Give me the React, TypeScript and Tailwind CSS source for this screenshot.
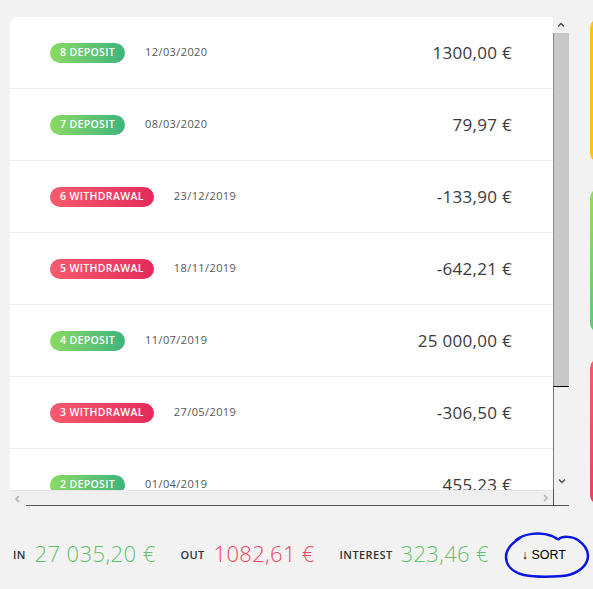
const rows = [
  { n: 8, type: "deposit", date: "12/03/2020", amount: "1300,00 €" },
  { n: 7, type: "deposit", date: "08/03/2020", amount: "79,97 €" },
  { n: 6, type: "withdrawal", date: "23/12/2019", amount: "-133,90 €" },
  { n: 5, type: "withdrawal", date: "18/11/2019", amount: "-642,21 €" },
  { n: 4, type: "deposit", date: "11/07/2019", amount: "25 000,00 €" },
  { n: 3, type: "withdrawal", date: "27/05/2019", amount: "-306,50 €" },
  { n: 2, type: "deposit", date: "01/04/2019", amount: "455,23 €" },
];

function Badge({ n, type }: { n: number; type: string }) {
  const color =
    type === "deposit"
      ? "bg-linear-to-r from-[#8ada61] to-[#3db37b]"
      : "bg-linear-to-r from-[#f65a6e] to-[#e3295a]";
  return (
    <div className={`flex h-[20px] items-center rounded-full px-[10px] text-[10.5px] font-semibold uppercase tracking-[0.35px] text-white ${color}`}>
      {n} {type}
    </div>
  );
}

function Chevron({ d, color }: { d: string; color: string }) {
  return (
    <svg width="8" height="8" viewBox="0 0 8 8">
      <polyline points={d} fill="none" stroke={color} strokeWidth="1.5" />
    </svg>
  );
}

export default function App() {
  return (
    <div className="flex h-screen w-screen gap-[21px] overflow-hidden bg-[#f2f2f2] pl-[10px] pt-[17px] font-['Open_Sans',sans-serif]">
      <div className="flex w-[559px] shrink-0 flex-col">
        <div className="flex h-[489px]">
          <div className="flex w-[543px] flex-col">
            <div className="flex-1 overflow-hidden rounded-tl-lg bg-white">
              {rows.map((r) => (
                <div key={r.n} className="flex h-[72px] shrink-0 items-center border-b border-[#eeeeee] pl-[40px] pr-[41px]">
                  <Badge n={r.n} type={r.type} />
                  <span className="ml-[20px] text-[11px] tracking-[0.4px] text-[#555]">{r.date}</span>
                  <span className="ml-auto text-[17px] tracking-[0.3px] text-[#3a3a3a]">{r.amount}</span>
                </div>
              ))}
            </div>
            {/* horizontal scrollbar */}
            <div className="flex h-[16px] border-t border-[#e6e6e6] bg-[#efefef]">
              <div className="flex w-[16px] items-center justify-center">
                <Chevron d="5,1 2,4 5,7" color="#b0b0b0" />
              </div>
              <div className="flex-1 border-b border-[#555]" />
              <div className="flex w-[16px] items-center justify-center border-b border-[#555]">
                <Chevron d="3,1 6,4 3,7" color="#b0b0b0" />
              </div>
            </div>
          </div>
          {/* vertical scrollbar */}
          <div className="flex w-[16px] flex-col">
            <div className="flex h-[16px] items-center justify-center bg-[#f1f1f1]">
              <Chevron d="1,5.5 4,2.5 7,5.5" color="#505050" />
            </div>
            <div className="h-[354px] border-b border-l border-b-black border-l-[#888] bg-[#c8c8c8]" />
            <div className="flex-1 border-l border-[#777] bg-[#f1f1f1]" />
            <div className="flex h-[16px] items-center justify-center border-l border-[#777] bg-[#f1f1f1]">
              <Chevron d="1,2.5 4,5.5 7,2.5" color="#505050" />
            </div>
            <div className="h-[17px] border-b border-l border-[#555] bg-[#f1f1f1]" />
          </div>
        </div>
        {/* totals */}
        <div className="mt-[30px] flex h-[34px] items-center pl-[3px]">
          <span className="pt-[4px] text-[11px] font-semibold tracking-[0.3px] text-[#333]">IN</span>
          <span className="ml-[9px] text-[22px] font-light tracking-[0.4px] text-[#5fc36c]">27 035,20 €</span>
          <span className="ml-[25px] pt-[4px] text-[11px] font-semibold tracking-[0.3px] text-[#333]">OUT</span>
          <span className="ml-[9px] text-[22px] font-light tracking-[0.3px] text-[#ef4560]">1082,61 €</span>
          <span className="ml-[25px] pt-[4px] text-[11px] font-semibold tracking-[0.4px] text-[#333]">INTEREST</span>
          <span className="ml-[8px] text-[22px] font-light tracking-[0.3px] text-[#5fc36c]">323,46 €</span>
          <button className="relative ml-[33px] pt-[4px] font-['Liberation_Sans',sans-serif] text-[12.5px] text-black">
            ↓ SORT
            <svg
              className="pointer-events-none absolute left-[-18px] top-[-13px]"
              width="88"
              height="52"
              viewBox="0 0 88 52"
            >
              <path
                d="M12 11 C20 5 35 2 48 7 C52 9 54 11 55 10 C58 7 68 7 74 11 C82 17 86 24 83 32 C80 40 70 46 58 47 C45 48 30 48 20 46 C8 43 2 36 2 28 C2 20 8 14 16 9"
                fill="none"
                stroke="#0a16e0"
                strokeWidth="2.5"
                strokeLinecap="round"
              />
            </svg>
          </button>
        </div>
      </div>
      {/* cards peeking in on the right */}
      <div className="flex shrink-0 flex-col gap-[25px] pt-px">
        <div className="h-[145px] w-[200px] rounded-[10px] bg-[#ffc20f]" />
        <div className="h-[145px] w-[200px] rounded-[10px] bg-linear-to-b from-[#94dd5c] to-[#5fc973]" />
        <div className="h-[147px] w-[200px] rounded-[10px] bg-linear-to-b from-[#ff5a6e] to-[#ef3b5e]" />
      </div>
    </div>
  );
}
